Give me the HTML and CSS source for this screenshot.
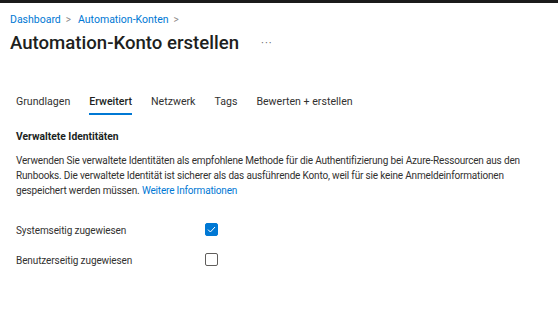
FILE: index.html
```html
<!DOCTYPE html>
<html lang="de">
<head>
    <meta charset="UTF-8">
    <title>Automation-Konto erstellen</title>
    <link rel="stylesheet" href="styles.css">
</head>
<body>
    <div class="topbar"></div>
    <div class="page">
        <nav class="breadcrumb">
            <a href="#">Dashboard</a>
            <span class="sep">&gt;</span>
            <a href="#">Automation-Konten</a>
            <span class="sep">&gt;</span>
        </nav>
        <div class="title-row">
            <h1>Automation-Konto erstellen</h1>
            <span class="more">&middot;&middot;&middot;</span>
        </div>

        <div class="tabs">
            <span class="tab">Grundlagen</span>
            <span class="tab active">Erweitert</span>
            <span class="tab">Netzwerk</span>
            <span class="tab">Tags</span>
            <span class="tab">Bewerten + erstellen</span>
        </div>

        <div class="content">
            <h2>Verwaltete Identitäten</h2>
            <p class="desc">
                Verwenden Sie verwaltete Identitäten als empfohlene Methode für die Authentifizierung bei Azure-Ressourcen aus den<br>
                Runbooks. Die verwaltete Identität ist sicherer als das ausführende Konto, weil für sie keine Anmeldeinformationen<br>
                gespeichert werden müssen. <a href="#">Weitere Informationen</a>
            </p>

            <div class="field first">
                <label>Systemseitig zugewiesen</label>
                <span class="check checked">
                    <svg width="9" height="7" viewBox="0 0 9 7"><path d="M1 3.6 L3.4 6 L8 1" fill="none" stroke="#fff" stroke-width="1"/></svg>
                </span>
            </div>
            <div class="field">
                <label>Benutzerseitig zugewiesen</label>
                <span class="check"></span>
            </div>
        </div>
    </div>
</body>
</html>
```

FILE: styles.css
```css
body {
    margin: 0;
    font-family: 'Segoe UI', Roboto, 'Open Sans', sans-serif;
    color: #323130;
    background: #fff;
}
.topbar {
    height: 3px;
    background-color: #1b1b1b;
}
.page {
    padding: 0 10px;
}
.breadcrumb {
    display: flex;
    align-items: center;
    gap: 5px;
    font-size: 10.5px;
    line-height: 16px;
    padding-top: 9px;
}
.breadcrumb a {
    color: #0078d4;
    text-decoration: none;
}
.breadcrumb .sep {
    color: #8a8886;
    font-size: 10px;
    margin-right: 2px;
}
.title-row {
    display: flex;
    align-items: center;
    gap: 22px;
    margin-top: 2px;
    height: 26px;
}
h1 {
    margin: 0;
    font-size: 18.6px;
    line-height: 26px;
    font-weight: 500;
    color: #201f1e;
}
.more {
    color: #605e5c;
    font-size: 11px;
    letter-spacing: 1px;
}
.tabs {
    display: flex;
    gap: 19px;
    margin-top: 32px;
    padding-left: 6px;
    font-size: 10.6px;
    line-height: 16px;
}
.tab {
    padding: 6px 0 3px;
    border-bottom: 2px solid transparent;
}
.tab.active {
    font-weight: 500;
    color: #201f1e;
    border-bottom-color: #0078d4;
}
.content {
    padding-left: 6px;
}
h2 {
    margin: 15px 0 0;
    font-size: 10.3px;
    line-height: 14px;
    font-weight: 700;
    color: #201f1e;
}
.desc {
    margin: 9px 0 0;
    font-size: 10px;
    letter-spacing: -0.17px;
    line-height: 15px;
    white-space: nowrap;
}
.desc a {
    color: #0078d4;
    text-decoration: none;
}
.field {
    display: flex;
    align-items: center;
    height: 30px;
}
.field.first {
    margin-top: 16px;
}
.field label {
    width: 189px;
    padding-top: 3px;
    font-size: 10px;
    letter-spacing: -0.1px;
}
.check {
    width: 11px;
    height: 11px;
    border: 1px solid #605e5c;
    border-radius: 2px;
    display: flex;
    align-items: center;
    justify-content: center;
}
.check.checked {
    background-color: #0078d4;
    border-color: #0078d4;
}
```
